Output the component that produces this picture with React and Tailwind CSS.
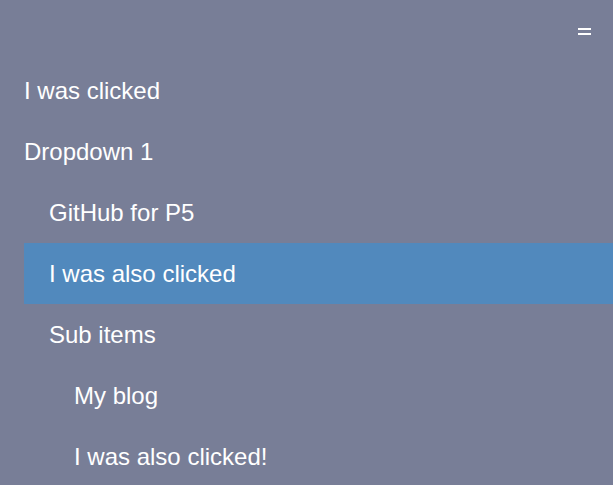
import React from 'react';

const items = [
  { label: 'I was clicked', level: 0 },
  { label: 'Dropdown 1', level: 0 },
  { label: 'GitHub for P5', level: 1 },
  { label: 'I was also clicked', level: 1, active: true },
  { label: 'Sub items', level: 1 },
  { label: 'My blog', level: 2 },
  { label: 'I was also clicked!', level: 2 },
];

const pad = ['pl-0', 'pl-[25px]', 'pl-[50px]'];

export default function App() {
  return (
    <div
      className="w-[613px] h-[485px] overflow-hidden bg-[#787e97] text-white"
      style={{ fontFamily: '"Liberation Sans", Arial, sans-serif' }}
    >
      <div className="flex justify-end h-[60px] pt-[28px] pr-[22px]">
        <div className="flex flex-col gap-[3px]">
          <span className="block w-[13px] h-[2px] bg-white" />
          <span className="block w-[13px] h-[2px] bg-white" />
        </div>
      </div>
      <ul className="pl-[24px]">
        {items.map((it, i) => (
          <li
            key={i}
            className={`h-[61px] flex items-center text-[24px] leading-none ${pad[it.level]} ${
              it.active ? 'bg-[#5189bd]' : ''
            }`}
          >
            {it.label}
          </li>
        ))}
      </ul>
    </div>
  );
}
